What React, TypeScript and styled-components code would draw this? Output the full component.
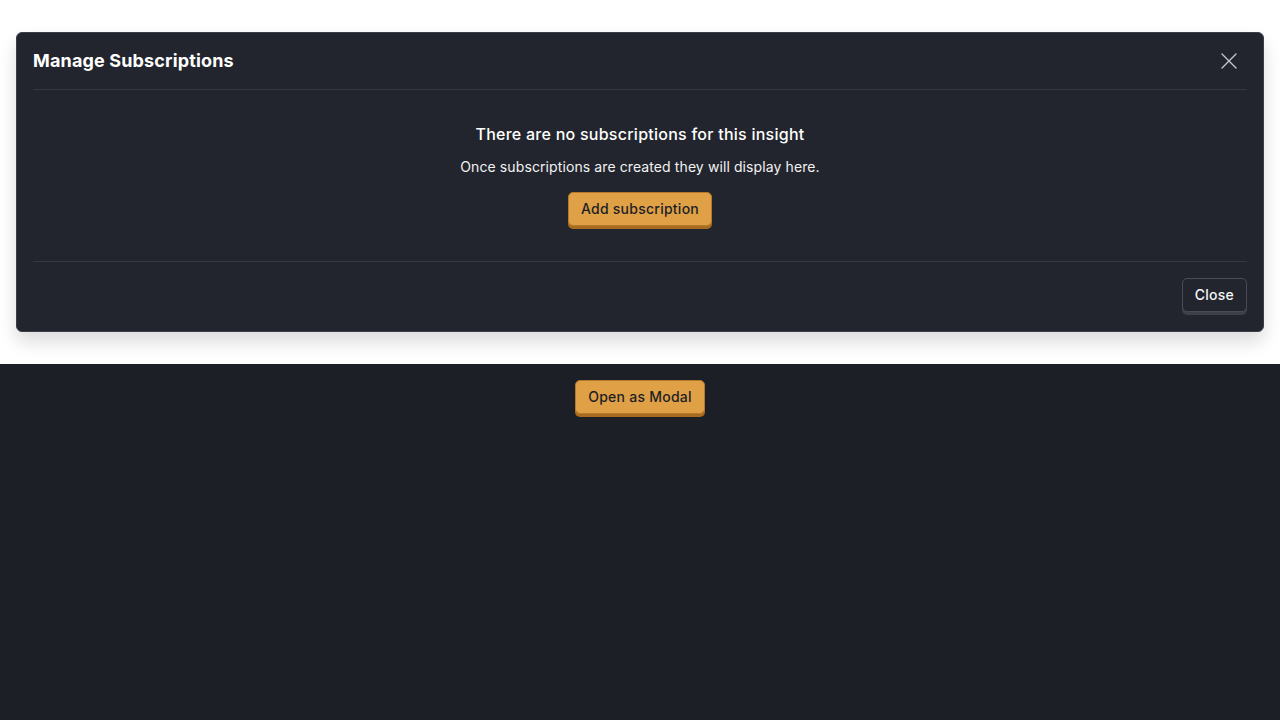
import React from "react";
import styled, { createGlobalStyle } from "styled-components";

const Global = createGlobalStyle`
  html, body { margin: 0; padding: 0; }
  body {
    font-family: Inter, "Noto Sans", sans-serif;
    background: #1d1f27;
  }
`;

const Page = styled.div`
  min-height: 720px;
  background: #1d1f27;
`;

const Preview = styled.section`
  background: #ffffff;
  padding: 32px 16px;
`;

const Modal = styled.div`
  background: #22252d;
  border: 1px solid #3b3e47;
  border-radius: 6px;
  box-shadow: 0 10px 18px rgba(0, 0, 0, 0.14);
  color: #f5f5f6;
`;

const Header = styled.div`
  margin: 0 16px;
  padding: 16px 0;
  display: flex;
  align-items: center;
  justify-content: space-between;
  border-bottom: 1px solid #363941;
`;

const Title = styled.h2`
  margin: 0;
  font-size: 18px;
  line-height: 24px;
  font-weight: 700;
  letter-spacing: 0.15px;
  color: #ffffff;
`;

const IconButton = styled.button`
  background: none;
  border: 0;
  padding: 0;
  margin-right: 10px;
  width: 16px;
  height: 16px;
  display: flex;
  align-items: center;
  justify-content: center;
  cursor: pointer;
  color: #c3c5cb;
`;

const Body = styled.div`
  padding: 32px 16px;
  display: flex;
  flex-direction: column;
  align-items: center;
  text-align: center;
`;

const EmptyTitle = styled.h3`
  margin: 0;
  font-size: 16px;
  line-height: 24px;
  font-weight: 500;
  letter-spacing: 0.25px;
  color: #ffffff;
`;

const EmptyText = styled.p`
  margin: 11px 0 15px;
  font-size: 14px;
  line-height: 20px;
  letter-spacing: 0.1px;
  color: #f2f2f3;
`;

const Footer = styled.div`
  margin: 0 16px;
  padding: 16px 0;
  display: flex;
  justify-content: flex-end;
  border-top: 1px solid #363941;
`;

const Button = styled.button<{ $variant?: "primary" | "secondary" }>`
  font-family: Inter, "Noto Sans", sans-serif;
  font-size: 14px;
  font-weight: 500;
  line-height: 20px;
  letter-spacing: 0.25px;
  padding: 6px 12px;
  border-radius: 5px;
  cursor: pointer;
  margin-bottom: 3px;
  background: ${(p) => (p.$variant === "secondary" ? "#22252d" : "#e0a045")};
  color: ${(p) => (p.$variant === "secondary" ? "#f5f5f6" : "#1d1f27")};
  border: 1px solid ${(p) => (p.$variant === "secondary" ? "#494c54" : "#b8782a")};
  box-shadow: 0 3px 0 ${(p) => (p.$variant === "secondary" ? "#3d4048" : "#a76c1f")};
`;

const Stage = styled.div`
  padding: 16px;
  display: flex;
  justify-content: center;
`;

export default function App() {
  return (
    <Page>
      <Global />
      <Preview>
        <Modal>
          <Header>
            <Title>Manage Subscriptions</Title>
            <IconButton aria-label="Close">
              <svg width="16" height="16" viewBox="0 0 16 16" fill="none">
                <path d="M1 1L15 15M15 1L1 15" stroke="currentColor" strokeWidth="1.4" strokeLinecap="round" />
              </svg>
            </IconButton>
          </Header>
          <Body>
            <EmptyTitle>There are no subscriptions for this insight</EmptyTitle>
            <EmptyText>Once subscriptions are created they will display here.</EmptyText>
            <Button $variant="primary">Add subscription</Button>
          </Body>
          <Footer>
            <Button $variant="secondary">Close</Button>
          </Footer>
        </Modal>
      </Preview>
      <Stage>
        <Button $variant="primary">Open as Modal</Button>
      </Stage>
    </Page>
  );
}
